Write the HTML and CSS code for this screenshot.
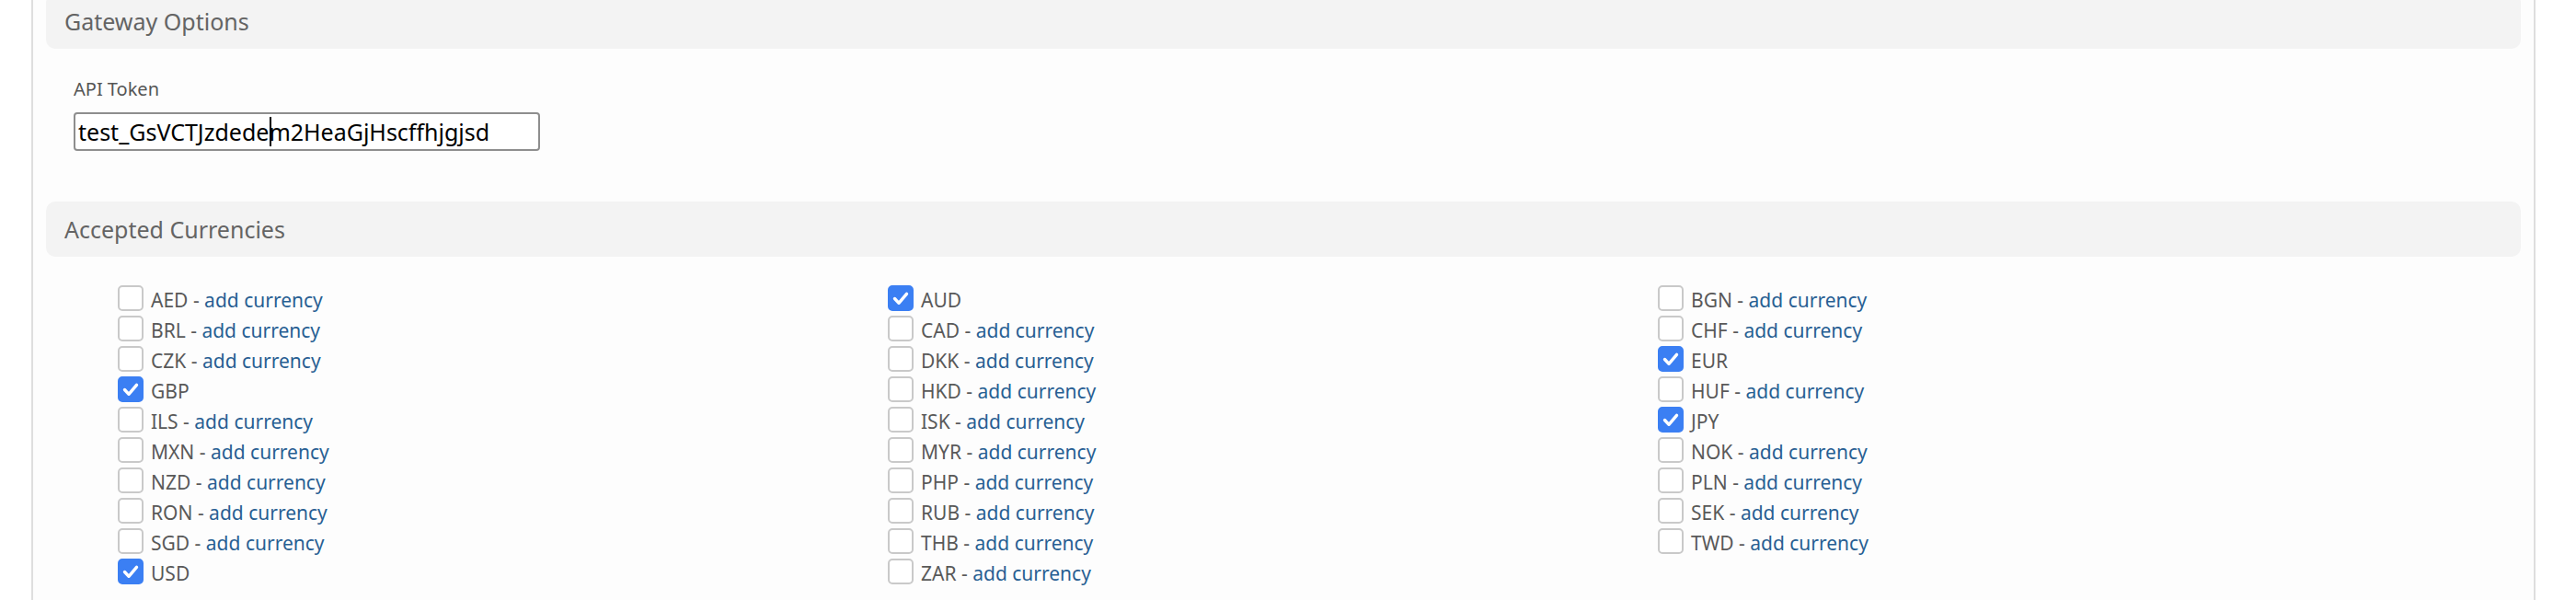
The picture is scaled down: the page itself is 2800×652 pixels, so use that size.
FILE: index.html
```html
<!DOCTYPE html>
<html lang="en">
<head>
<meta charset="utf-8">
<title>Gateway Options</title>
<link rel="stylesheet" href="styles.css">
</head>
<body>
<div class="panel">
  <div class="section-header">Gateway Options</div>
  <div class="form-group">
    <label class="field-label" for="api-token">API Token</label>
    <div class="input-wrap">
      <input id="api-token" class="text-input" type="text" value="test_GsVCTJzdedem2HeaGjHscffhjgjsd">
      <span class="caret"></span>
    </div>
  </div>

  <div class="section-header">Accepted Currencies</div>
  <div class="currency-grid">
    <div class="col">
      <div class="row"><span class="cb"></span><span class="code">AED - </span><a class="add" href="#">add currency</a></div>
      <div class="row"><span class="cb"></span><span class="code">BRL - </span><a class="add" href="#">add currency</a></div>
      <div class="row"><span class="cb"></span><span class="code">CZK - </span><a class="add" href="#">add currency</a></div>
      <div class="row"><span class="cb checked"><svg viewBox="0 0 24 24"><path d="M5.5 12.5l4.5 4.8 8.5-10"/></svg></span><span class="code">GBP</span></div>
      <div class="row"><span class="cb"></span><span class="code">ILS - </span><a class="add" href="#">add currency</a></div>
      <div class="row"><span class="cb"></span><span class="code">MXN - </span><a class="add" href="#">add currency</a></div>
      <div class="row"><span class="cb"></span><span class="code">NZD - </span><a class="add" href="#">add currency</a></div>
      <div class="row"><span class="cb"></span><span class="code">RON - </span><a class="add" href="#">add currency</a></div>
      <div class="row"><span class="cb"></span><span class="code">SGD - </span><a class="add" href="#">add currency</a></div>
      <div class="row"><span class="cb checked"><svg viewBox="0 0 24 24"><path d="M5.5 12.5l4.5 4.8 8.5-10"/></svg></span><span class="code">USD</span></div>
    </div>
    <div class="col">
      <div class="row"><span class="cb checked"><svg viewBox="0 0 24 24"><path d="M5.5 12.5l4.5 4.8 8.5-10"/></svg></span><span class="code">AUD</span></div>
      <div class="row"><span class="cb"></span><span class="code">CAD - </span><a class="add" href="#">add currency</a></div>
      <div class="row"><span class="cb"></span><span class="code">DKK - </span><a class="add" href="#">add currency</a></div>
      <div class="row"><span class="cb"></span><span class="code">HKD - </span><a class="add" href="#">add currency</a></div>
      <div class="row"><span class="cb"></span><span class="code">ISK - </span><a class="add" href="#">add currency</a></div>
      <div class="row"><span class="cb"></span><span class="code">MYR - </span><a class="add" href="#">add currency</a></div>
      <div class="row"><span class="cb"></span><span class="code">PHP - </span><a class="add" href="#">add currency</a></div>
      <div class="row"><span class="cb"></span><span class="code">RUB - </span><a class="add" href="#">add currency</a></div>
      <div class="row"><span class="cb"></span><span class="code">THB - </span><a class="add" href="#">add currency</a></div>
      <div class="row"><span class="cb"></span><span class="code">ZAR - </span><a class="add" href="#">add currency</a></div>
    </div>
    <div class="col">
      <div class="row"><span class="cb"></span><span class="code">BGN - </span><a class="add" href="#">add currency</a></div>
      <div class="row"><span class="cb"></span><span class="code">CHF - </span><a class="add" href="#">add currency</a></div>
      <div class="row"><span class="cb checked"><svg viewBox="0 0 24 24"><path d="M5.5 12.5l4.5 4.8 8.5-10"/></svg></span><span class="code">EUR</span></div>
      <div class="row"><span class="cb"></span><span class="code">HUF - </span><a class="add" href="#">add currency</a></div>
      <div class="row"><span class="cb checked"><svg viewBox="0 0 24 24"><path d="M5.5 12.5l4.5 4.8 8.5-10"/></svg></span><span class="code">JPY</span></div>
      <div class="row"><span class="cb"></span><span class="code">NOK - </span><a class="add" href="#">add currency</a></div>
      <div class="row"><span class="cb"></span><span class="code">PLN - </span><a class="add" href="#">add currency</a></div>
      <div class="row"><span class="cb"></span><span class="code">SEK - </span><a class="add" href="#">add currency</a></div>
      <div class="row"><span class="cb"></span><span class="code">TWD - </span><a class="add" href="#">add currency</a></div>
    </div>
  </div>
</div>
</body>
</html>
```
FILE: styles.css
```css
html, body {
  margin: 0;
  padding: 0;
  background: #ffffff;
  font-family: "Noto Sans", "Open Sans", sans-serif;
  height: 100%;
  overflow: hidden;
}

.panel {
  box-sizing: border-box;
  margin-left: 34px;
  margin-top: -7px;
  width: 2722px;
  min-height: 700px;
  background: #fdfdfd;
  border-left: 2px solid #dedede;
  border-right: 2px solid #dedede;
  padding: 0 14px;
}

.section-header {
  height: 60px;
  line-height: 60px;
  background: #f3f3f3;
  border-radius: 10px;
  padding-left: 20px;
  font-size: 25px;
  color: #646464;
}

.form-group {
  box-sizing: border-box;
  height: 166px;
  padding: 30px 0 0 30px;
}

.field-label {
  display: block;
  font-size: 20px;
  line-height: 28px;
  color: #555555;
  margin-bottom: 11px;
}

.input-wrap {
  position: relative;
  display: inline-block;
  vertical-align: top;
}

.text-input {
  display: block;
  box-sizing: border-box;
  width: 507px;
  height: 42px;
  border: 2px solid #8e8e8e;
  border-radius: 4px;
  background: #ffffff;
  padding: 0 3px;
  font-family: "Noto Sans", "Open Sans", sans-serif;
  font-size: 25px;
  color: #000000;
  outline: none;
}

.caret {
  position: absolute;
  left: 213px;
  top: 5px;
  width: 2px;
  height: 32px;
  background: #000000;
}

.currency-grid {
  display: grid;
  grid-template-columns: 837px 837px 837px;
  padding: 30px 0 0 78px;
}

.row {
  display: flex;
  align-items: center;
  height: 33px;
  font-size: 21px;
  color: #595959;
  white-space: pre;
}

.cb {
  box-sizing: border-box;
  width: 28px;
  height: 28px;
  border: 2px solid #c9c9c9;
  border-radius: 5px;
  background: #ffffff;
  margin-right: 8px;
  flex: none;
  position: relative;
  top: -2px;
}

.cb.checked {
  background: #3b7ff3;
  border-color: #3b7ff3;
}

.cb svg {
  display: block;
  width: 24px;
  height: 24px;
  fill: none;
  stroke: #ffffff;
  stroke-width: 3.4;
  stroke-linecap: round;
  stroke-linejoin: round;
}

.code {
  color: #595959;
}

.add {
  color: #285f93;
  text-decoration: none;
}
```
